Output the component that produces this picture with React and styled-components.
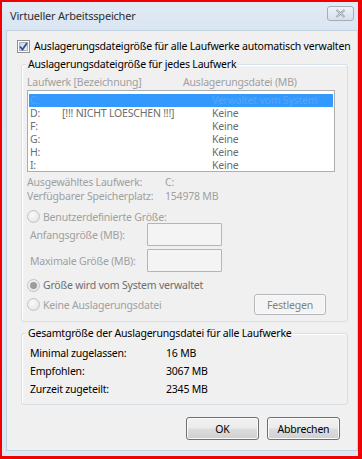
import React from 'react';
import styled, { createGlobalStyle } from 'styled-components';

const Global = createGlobalStyle`
  html, body { margin: 0; padding: 0; background: #ff0000; }
  body {
    font-family: "Noto Sans", "Open Sans", sans-serif;
    font-size: 10.5px;
    letter-spacing: -0.2px;
  }
`;

const Frame = styled.div`
  width: 362px;
  height: 459px;
  box-sizing: border-box;
  border-style: solid;
  border-color: #f00000;
  border-width: 2px 4px 3px 2px;
  display: flex;
  flex-direction: column;
  background: linear-gradient(#e2ebf5, #d9e5f2 30px, #dce7f3);
`;

const TitleBar = styled.div`
  height: 28px;
  display: flex;
  align-items: center;
  justify-content: space-between;
  padding: 0 4px 0 8px;
`;

const Title = styled.div`
  color: #2f2f2f;
  font-size: 11px;
  margin-top: -1px;
`;

const CloseBtn = styled.div`
  width: 27px;
  height: 15px;
  margin-top: -5px;
  box-sizing: border-box;
  border: 1px solid #a3adb9;
  border-radius: 3px;
  background: linear-gradient(#eef2f7, #d7e0ea);
  display: flex;
  align-items: center;
  justify-content: center;
`;

const Client = styled.div`
  flex: 1;
  margin: 0 0 5px 4px;
  background: #f0f0f0;
  border: 1px solid #c3d1df;
  display: flex;
  flex-direction: column;
  padding: 8px 0 0 0;
  color: #000;
`;

const CheckRow = styled.label`
  display: flex;
  align-items: center;
  gap: 4px;
  height: 14px;
  margin-left: 10px;
  white-space: nowrap;
`;

const Group = styled.div`
  position: relative;
  margin: ${p => p.$top}px 9px 0 14px;
  border: 1px solid #d5dfe5;
  border-radius: 3px;
  box-shadow: inset 1px 1px 0 #fff;
  padding: ${p => p.$pad};
  display: flex;
  flex-direction: column;
`;

const Legend = styled.div`
  position: absolute;
  top: -8px;
  left: 4px;
  padding: 0 2px;
  background: #f0f0f0;
  line-height: 14px;
  color: #000;
  white-space: nowrap;
`;

const Header = styled.div`
  display: grid;
  grid-template-columns: 156px 1fr;
  height: 14px;
  line-height: 14px;
  color: #a0a0a0;
`;

const ListBox = styled.div`
  margin-top: 1px;
  width: 308px;
  height: 82px;
  box-sizing: border-box;
  border: 1px solid #adadad;
  background: #fff;
  padding: 3px 1px 0 1px;
`;

const ListRow = styled.div`
  display: grid;
  grid-template-columns: 32px 150px 1fr;
  height: 13px;
  line-height: 13px;
  padding-left: 1px;
  background: ${p => (p.$sel ? '#3399ff' : 'transparent')};
  color: ${p => (p.$sel ? '#58a5f6' : '#6d6d6d')};
`;

const InfoRow = styled.div`
  display: grid;
  grid-template-columns: 138px 1fr;
  height: 14px;
  line-height: 14px;
  color: #a0a0a0;
  margin-top: ${p => p.$top || 0}px;
`;

const RadioRow = styled.div`
  display: flex;
  align-items: center;
  gap: 3px;
  height: ${p => p.$h || 14}px;
  margin-top: ${p => p.$top || 0}px;
  color: ${p => (p.$dim ? '#a0a0a0' : '#6d6d6d')};
`;

const SizeRow = styled.div`
  display: flex;
  align-items: center;
  height: 23px;
  margin-top: ${p => p.$top || 0}px;
  padding-left: 3px;
  color: #a0a0a0;
`;

const SizeLabel = styled.span`
  width: 117px;
`;

const TextBox = styled.div`
  width: 75px;
  height: 23px;
  box-sizing: border-box;
  border: 1px solid #b5b5b5;
  border-radius: 1px;
  background: #f4f4f4;
`;

const ActionRow = styled.div`
  display: flex;
  align-items: center;
  justify-content: space-between;
  height: 21px;
  margin-top: 2px;
  padding-right: 21px;
`;

const Button = styled.div`
  flex: none;
  width: ${p => p.$w}px;
  height: ${p => p.$h}px;
  box-sizing: border-box;
  border: 1px solid ${p => (p.$disabled ? '#b4b8bc' : '#707070')};
  border-radius: 3px;
  background: ${p =>
    p.$disabled
      ? '#f4f4f4'
      : 'linear-gradient(#f2f2f2 0%, #ebebeb 48%, #dddddd 52%, #cfcfcf 100%)'};
  box-shadow: inset 0 0 0 1px ${p => (p.$disabled ? '#fafafa' : '#fbfbfb')};
  color: ${p => (p.$disabled ? '#838383' : '#000')};
  display: flex;
  align-items: center;
  justify-content: center;
`;

const TotalRow = styled.div`
  display: grid;
  grid-template-columns: 136px 1fr;
  height: 18px;
  line-height: 18px;
`;

const Footer = styled.div`
  display: flex;
  justify-content: flex-end;
  gap: 8px;
  margin: 12px 17px 0 0;
`;

const Check = () => (
  <svg width="13" height="13" viewBox="0 0 13 13">
    <defs>
      <linearGradient id="cb" x1="0" y1="0" x2="1" y2="1">
        <stop offset="0" stopColor="#cbcfd5" />
        <stop offset="1" stopColor="#f6f6f6" />
      </linearGradient>
    </defs>
    <rect x="0.5" y="0.5" width="12" height="12" fill="#fff" stroke="#8e8f8f" />
    <rect x="2.5" y="2.5" width="8" height="8" fill="url(#cb)" stroke="#aeb3b9" />
    <path d="M3 6.5 L5.5 9.5 L10 3" fill="none" stroke="#2f4f9e" strokeWidth="1.8" />
  </svg>
);

const Radio = ({ on }) => (
  <svg width="13" height="13" viewBox="0 0 13 13">
    <defs>
      <radialGradient id="rg" cx="0.4" cy="0.4" r="0.7">
        <stop offset="0" stopColor="#fafafa" />
        <stop offset="1" stopColor="#e2e2e2" />
      </radialGradient>
    </defs>
    <circle cx="6.5" cy="6.5" r="6" fill="url(#rg)" stroke="#c2c2c2" />
    {on && <circle cx="6.5" cy="6.5" r="3.2" fill="#9d9d9d" stroke="#8a8a8a" strokeWidth="0.6" />}
  </svg>
);

const CloseX = () => (
  <svg width="11" height="9" viewBox="0 0 11 9">
    <path d="M1.5 1 L9.5 8 M9.5 1 L1.5 8" stroke="#8c98a6" strokeWidth="2" />
    <path d="M1.5 1 L9.5 8 M9.5 1 L1.5 8" stroke="#f4f6f8" strokeWidth="0.7" />
  </svg>
);

const drives = [
  ['C:', '', 'Verwaltet vom System', true],
  ['D:', '[!!! NICHT LOESCHEN !!!]', 'Keine'],
  ['F:', '', 'Keine'],
  ['G:', '', 'Keine'],
  ['H:', '', 'Keine'],
  ['I:', '', 'Keine'],
];

export default function App() {
  return (
    <>
      <Global />
      <Frame>
        <TitleBar>
          <Title>Virtueller Arbeitsspeicher</Title>
          <CloseBtn><CloseX /></CloseBtn>
        </TitleBar>
        <Client>
          <CheckRow>
            <Check />
            <span>Auslagerungsdateigröße für alle Laufwerke automatisch verwalten</span>
          </CheckRow>

          <Group $top={11} $pad="10px 0 6px 5px">
            <Legend>Auslagerungsdateigröße für jedes Laufwerk</Legend>
            <Header>
              <span>Laufwerk [Bezeichnung]</span>
              <span>Auslagerungsdatei (MB)</span>
            </Header>
            <ListBox>
              {drives.map(([d, name, size, sel]) => (
                <ListRow key={d} $sel={sel}>
                  <span>{d}</span>
                  <span>{name}</span>
                  <span>{size}</span>
                </ListRow>
              ))}
            </ListBox>
            <InfoRow $top={3}>
              <span>Ausgewähltes Laufwerk:</span>
              <span>C:</span>
            </InfoRow>
            <InfoRow>
              <span>Verfügbarer Speicherplatz:</span>
              <span>154978 MB</span>
            </InfoRow>
            <RadioRow $top={7} $h={13} $dim>
              <Radio />
              <span>Benutzerdefinierte Größe:</span>
            </RadioRow>
            <SizeRow>
              <SizeLabel>Anfangsgröße (MB):</SizeLabel>
              <TextBox />
            </SizeRow>
            <SizeRow $top={3}>
              <SizeLabel>Maximale Größe (MB):</SizeLabel>
              <TextBox />
            </SizeRow>
            <RadioRow $top={6}>
              <Radio on />
              <span>Größe wird vom System verwaltet</span>
            </RadioRow>
            <ActionRow>
              <RadioRow $dim>
                <Radio />
                <span>Keine Auslagerungsdatei</span>
              </RadioRow>
              <Button $w={72} $h={21} $disabled>Festlegen</Button>
            </ActionRow>
          </Group>

          <Group $top={11} $pad="10px 0 6px 8px">
            <Legend>Gesamtgröße der Auslagerungsdatei für alle Laufwerke</Legend>
            <TotalRow><span>Minimal zugelassen:</span><span>16 MB</span></TotalRow>
            <TotalRow><span>Empfohlen:</span><span>3067 MB</span></TotalRow>
            <TotalRow><span>Zurzeit zugeteilt:</span><span>2345 MB</span></TotalRow>
          </Group>

          <Footer>
            <Button $w={73} $h={23}>OK</Button>
            <Button $w={73} $h={23}>Abbrechen</Button>
          </Footer>
        </Client>
      </Frame>
    </>
  );
}
